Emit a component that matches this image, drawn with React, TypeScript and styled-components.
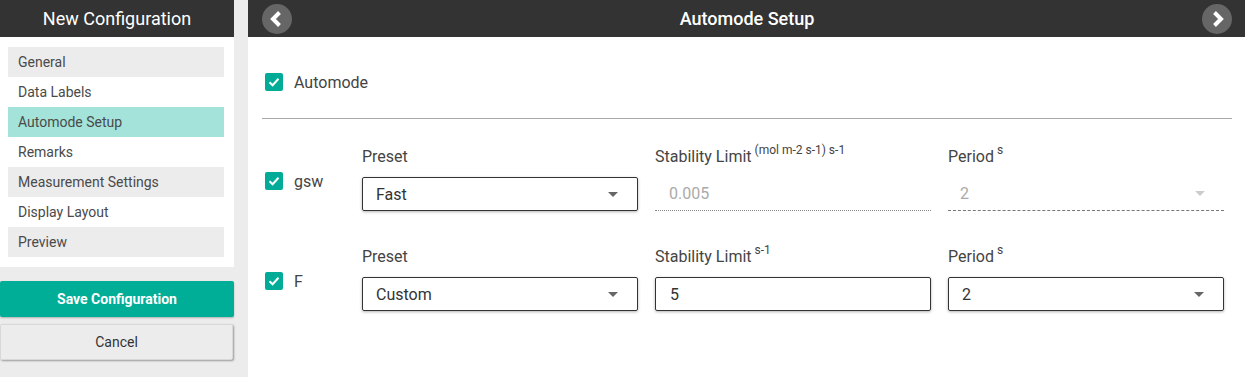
import React from "react";
import styled, { createGlobalStyle, css } from "styled-components";

const GlobalStyle = createGlobalStyle`
  html, body { margin: 0; padding: 0; }
  body {
    background: #ececec;
    font-family: Roboto, "Liberation Sans", Arial, sans-serif;
    color: #444;
  }
  * { box-sizing: border-box; }
`;

const Page = styled.div`
  display: flex;
  gap: 14px;
  height: 377px;
  overflow: hidden;
`;

const Sidebar = styled.aside`
  width: 234px;
  flex: none;
  display: flex;
  flex-direction: column;
`;

const SideTitle = styled.div`
  height: 37px;
  background: #333;
  color: #fff;
  font-size: 18px;
  font-weight: 400;
  display: flex;
  align-items: center;
  justify-content: center;
`;

const MenuPanel = styled.nav`
  background: #fff;
  padding: 10px 10px 10px 8px;
  display: flex;
  flex-direction: column;
`;

const MenuItem = styled.div<{ $striped?: boolean; $active?: boolean }>`
  height: 30px;
  padding-left: 10px;
  display: flex;
  align-items: center;
  font-size: 14px;
  color: #4a4a4a;
  background: ${(p) => (p.$active ? "#a3e3d9" : p.$striped ? "#ececec" : "#fff")};
`;

const SaveButton = styled.button`
  margin-top: 14px;
  height: 36px;
  width: 234px;
  border: none;
  border-radius: 2px;
  background: #00ad97;
  color: #fff;
  font-family: inherit;
  font-size: 14px;
  font-weight: 700;
  box-shadow: 0 1px 2px rgba(0, 0, 0, 0.25);
`;

const CancelButton = styled.button`
  margin-top: 7px;
  height: 36px;
  width: 233px;
  border: 1px solid #d8d8d8;
  border-radius: 2px;
  background: #ececec;
  color: #333;
  font-family: inherit;
  font-size: 14px;
  box-shadow: 1px 1px 2px rgba(0, 0, 0, 0.35);
`;

const Main = styled.main`
  flex: 1;
  background: #fff;
  display: flex;
  flex-direction: column;
`;

const Header = styled.header`
  height: 37px;
  margin-right: 2px;
  background: #333;
  display: flex;
  align-items: center;
  justify-content: space-between;
  padding: 0 13px 0 14px;
`;

const HeaderTitle = styled.h1`
  margin: 0;
  font-size: 18px;
  font-weight: 500;
  color: #fff;
`;

const NavButton = styled.button`
  width: 30px;
  height: 30px;
  border-radius: 50%;
  border: none;
  padding: 0;
  background: #666;
  display: flex;
  align-items: center;
  justify-content: center;
`;

const Content = styled.section`
  padding: 0 15px 0 14px;
`;

const AutomodeRow = styled.div`
  margin-top: 27px;
  height: 36px;
  display: flex;
  align-items: center;
  gap: 11px;
  padding-left: 3px;
  font-size: 16px;
  color: #444;
`;

const Divider = styled.hr`
  margin: 18px 0 0;
  border: none;
  height: 1px;
  background: #aaa;
`;

const ChannelRow = styled.div<{ $first?: boolean }>`
  display: grid;
  grid-template-columns: 83px repeat(3, 276px);
  column-gap: 17px;
  margin-top: ${(p) => (p.$first ? "28px" : "36px")};
`;

const ChannelToggle = styled.div`
  padding-top: 25px;
  padding-left: 3px;
  display: flex;
  align-items: flex-start;
  gap: 11px;
  font-size: 16px;
  line-height: 19px;
  color: #444;
`;

const Field = styled.div`
  display: flex;
  flex-direction: column;
`;

const Label = styled.div`
  height: 20px;
  line-height: 20px;
  font-size: 16px;
  color: #444;
  white-space: nowrap;
`;

const Sup = styled.span`
  font-size: 12px;
  position: relative;
  top: -8px;
  margin-left: 3px;
`;

const boxBase = css<{ $disabled?: boolean }>`
  margin-top: 10px;
  height: 34px;
  display: flex;
  align-items: center;
  font-size: 16px;
  ${(p) =>
    p.$disabled
      ? css`
          color: #aaa;
          border-bottom: 1px dotted #888;
        `
      : css`
          color: #333;
          border: 1px solid #333;
          border-radius: 2px;
          box-shadow: 0 1px 3px rgba(0, 0, 0, 0.3);
        `}
`;

const SelectBox = styled.div<{ $disabled?: boolean }>`
  ${boxBase}
  justify-content: space-between;
  padding: 0 19px 0 13px;
  ${(p) =>
    p.$disabled &&
    css`
      border-bottom: 1px dashed #777;
      padding-left: 12px;
    `}
`;

const TextBox = styled.div<{ $disabled?: boolean }>`
  ${boxBase}
  padding-left: 14px;
`;

const Arrow = styled.span<{ $disabled?: boolean }>`
  width: 0;
  height: 0;
  border-left: 5px solid transparent;
  border-right: 5px solid transparent;
  border-top: 5px solid ${(p) => (p.$disabled ? "#ccc" : "#666")};
`;

const CheckBox = styled.span`
  width: 18px;
  height: 18px;
  flex: none;
  border-radius: 2px;
  background: #00ab97;
  display: flex;
  align-items: center;
  justify-content: center;
`;

const Check = () => (
  <CheckBox>
    <svg width="14" height="14" viewBox="0 0 14 14">
      <polyline points="2.5,7.2 5.6,10.2 11.5,3.8" fill="none" stroke="#fff" strokeWidth="2" />
    </svg>
  </CheckBox>
);

const Chevron = ({ dir }: { dir: "left" | "right" }) => (
  <svg width="30" height="30" viewBox="0 0 30 30">
    <polyline
      points={dir === "left" ? "17.5,8.5 11,15 17.5,21.5" : "12.5,8.5 19,15 12.5,21.5"}
      fill="none"
      stroke="#fff"
      strokeWidth="4"
    />
  </svg>
);

const menu = [
  "General",
  "Data Labels",
  "Automode Setup",
  "Remarks",
  "Measurement Settings",
  "Display Layout",
  "Preview",
];

type Channel = {
  name: string;
  preset: string;
  limitUnit: string;
  limit: string;
  period: string;
  disabled: boolean;
};

const channels: Channel[] = [
  { name: "gsw", preset: "Fast", limitUnit: "(mol m-2 s-1) s-1", limit: "0.005", period: "2", disabled: true },
  { name: "F", preset: "Custom", limitUnit: "s-1", limit: "5", period: "2", disabled: false },
];

export default function App() {
  return (
    <>
      <GlobalStyle />
      <Page>
        <Sidebar>
          <SideTitle>New Configuration</SideTitle>
          <MenuPanel>
            {menu.map((m, i) => (
              <MenuItem key={m} $striped={i % 2 === 0} $active={m === "Automode Setup"}>
                {m}
              </MenuItem>
            ))}
          </MenuPanel>
          <SaveButton>Save Configuration</SaveButton>
          <CancelButton>Cancel</CancelButton>
        </Sidebar>
        <Main>
          <Header>
            <NavButton aria-label="Previous">
              <Chevron dir="left" />
            </NavButton>
            <HeaderTitle>Automode Setup</HeaderTitle>
            <NavButton aria-label="Next">
              <Chevron dir="right" />
            </NavButton>
          </Header>
          <Content>
            <AutomodeRow>
              <Check />
              Automode
            </AutomodeRow>
            <Divider />
            {channels.map((c, i) => (
              <ChannelRow key={c.name} $first={i === 0}>
                <ChannelToggle>
                  <Check />
                  {c.name}
                </ChannelToggle>
                <Field>
                  <Label>Preset</Label>
                  <SelectBox>
                    {c.preset}
                    <Arrow />
                  </SelectBox>
                </Field>
                <Field>
                  <Label>
                    Stability Limit<Sup>{c.limitUnit}</Sup>
                  </Label>
                  <TextBox $disabled={c.disabled}>{c.limit}</TextBox>
                </Field>
                <Field>
                  <Label>
                    Period<Sup>s</Sup>
                  </Label>
                  <SelectBox $disabled={c.disabled}>
                    {c.period}
                    <Arrow $disabled={c.disabled} />
                  </SelectBox>
                </Field>
              </ChannelRow>
            ))}
          </Content>
        </Main>
      </Page>
    </>
  );
}
